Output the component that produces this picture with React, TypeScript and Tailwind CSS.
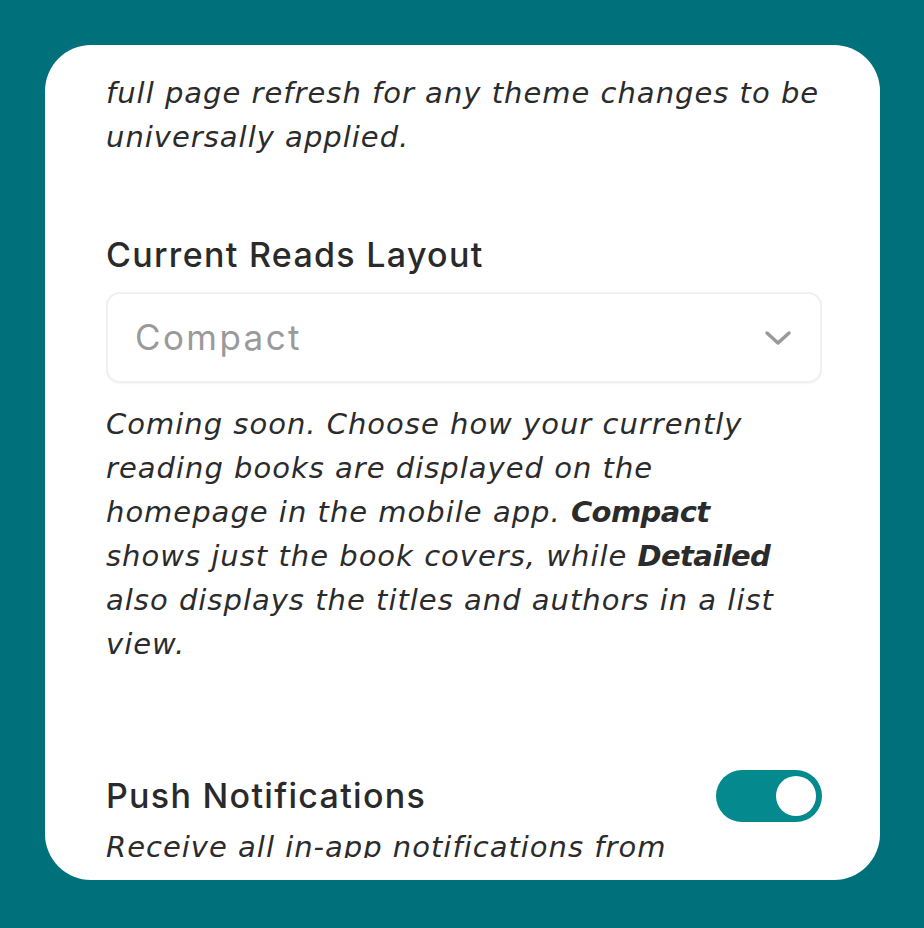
import React, { useState } from 'react'

const body = 'italic text-[29px] leading-[44px] tracking-[1px] text-[#2b2b2b]'
const heading = 'font-["Inter",sans-serif] text-[34px] leading-[44px] font-medium tracking-[1.3px] text-[#2a2a2a]'
const strong = 'font-semibold tracking-[-0.6px]'

export default function App() {
  const [pushOn, setPushOn] = useState(true)

  return (
    <div
      className="w-[924px] h-[928px] bg-[#00717a] p-[45px] pr-[44px] pb-[48px]"
      style={{ fontFamily: '"DejaVu Sans", "Liberation Sans", sans-serif' }}
    >
      <div className="h-full bg-white rounded-[46px] pt-[26px] pb-[22px] pl-[61px] pr-[58px]">
        <div className="h-full overflow-hidden">
          {/* Theme note (tail) */}
          <p className={body}>
            full page refresh for any theme changes to be
            <br />
            universally applied.
          </p>

          {/* Current Reads Layout */}
          <h2 className={`mt-[74px] ${heading}`}>Current Reads Layout</h2>
          <button className="mt-[15px] w-full h-[91px] flex items-center justify-between rounded-[14px] border-2 border-[#f0f0f0] bg-white pl-[27px] pr-[28px] shadow-[0_1px_2px_rgba(0,0,0,0.04)]">
            <span className='font-["Inter",sans-serif] text-[35px] tracking-[2.4px] text-[#9a9a9a]'>Compact</span>
            <svg width="28" height="18" viewBox="0 0 28 18" fill="none">
              <path d="M3 4 L14 14 L25 4" stroke="#9a9a9a" strokeWidth="3.5" strokeLinecap="round" strokeLinejoin="round" />
            </svg>
          </button>
          <p className={`mt-[19px] ${body}`}>
            Coming soon. Choose how your currently
            <br />
            reading books are displayed on the
            <br />
            homepage in the mobile app. <span className={strong}>Compact</span>
            <br />
            shows just the book covers, while <span className={strong}>Detailed</span>
            <br />
            also displays the titles and authors in a list
            <br />
            view.
          </p>

          {/* Push Notifications */}
          <div className="mt-[104px] flex items-center justify-between">
            <h2 className={heading}>Push Notifications</h2>
            <button
              onClick={() => setPushOn(!pushOn)}
              className={`w-[106px] h-[52px] rounded-full flex items-center px-[6px] ${
                pushOn ? 'bg-[#03898e] justify-end' : 'bg-gray-300 justify-start'
              }`}
            >
              <span className="w-[40px] h-[40px] rounded-full bg-white block" />
            </button>
          </div>
          <p className={`mt-[3px] ${body}`}>Receive all in-app notifications from</p>
        </div>
      </div>
    </div>
  )
}
